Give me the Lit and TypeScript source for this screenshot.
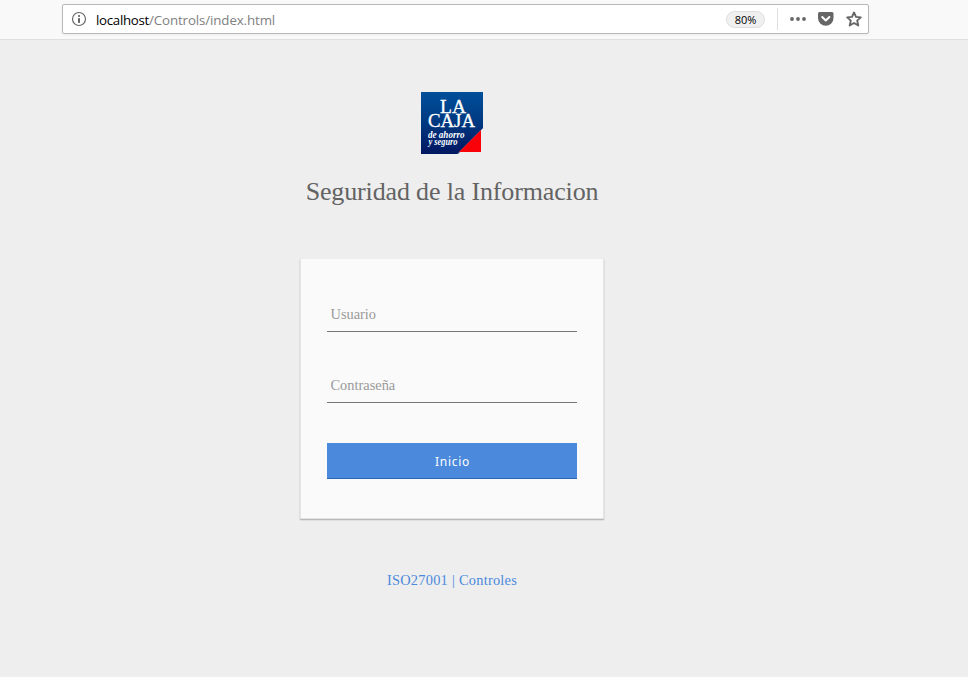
import { LitElement, html, css } from "lit";
import { customElement } from "lit/decorators.js";

@customElement("address-bar")
class AddressBar extends LitElement {
  static styles = css`
    :host { display: block; box-sizing: border-box; height: 40px; padding: 4px 0 0 62px; background: #f9f9fa; border-bottom: 1px solid #e0e0e1; }
    .field { box-sizing: border-box; width: 807px; height: 30px; display: flex; align-items: center; background: #fff; border: 1px solid #b8b8b9; border-radius: 2px; box-shadow: 0 1px 3px rgba(0,0,0,.05); padding: 0 6px 0 8px; }
    svg { display: block; flex: none; }
    .url { flex: 1; margin-left: 9px; font: 13.3px/20px "Open Sans", sans-serif; letter-spacing: -0.11px; color: #808080; white-space: nowrap; padding-top: 1px; }
    .host { color: #000; letter-spacing: -0.3px; }
    .zoom { box-sizing: border-box; width: 39px; height: 17px; border: 1px solid #dedede; border-radius: 9px; background: #f0f0f0; font: 11px/16px "Open Sans", sans-serif; letter-spacing: -0.05px; text-align: center; color: #000; }
    .rule { width: 1px; height: 22px; background: #dfdfdf; margin: 0 12px; }
    .pocket { margin: 0 11px 0 12px; }
  `;
  render() {
    return html`<div class="field">
      <svg width="16" height="16" viewBox="0 0 16 16"><circle cx="8" cy="8" r="6.5" fill="none" stroke="#696969" stroke-width="1.2"/><rect x="7" y="4" width="2" height="2" rx=".7" fill="#666"/><rect x="7" y="7" width="2" height="5" rx=".7" fill="#666"/></svg>
      <div class="url"><span class="host">localhost</span>/Controls/index.html</div>
      <div class="zoom">80%</div>
      <div class="rule"></div>
      <svg width="16" height="16" viewBox="0 0 16 16" fill="#666"><circle cx="2" cy="8" r="1.900"/><circle cx="8" cy="8" r="1.900"/><circle cx="14" cy="8" r="1.900"/></svg>
      <svg class="pocket" width="17" height="16" viewBox="0 0 17 16"><path d="M1.500 1h12.500q1.500 0 1.500 1.500V7a7.750 7.750 0 0 1-15.500 0V2.500Q0 1 1.500 1z" fill="#666"/><path d="M4.200 6l3.600 3.500L11.400 6" fill="none" stroke="#fff" stroke-width="2" stroke-linecap="round" stroke-linejoin="round"/></svg>
      <svg width="16" height="16" viewBox="0 0 16 16"><path d="M8 1.500l2 4.400 4.800.5-3.600 3.200 1.100 4.900L8 12l-4.300 2.500 1.100-4.900L1.200 6.400 6 5.900z" fill="none" stroke="#666" stroke-width="1.900" stroke-linejoin="round"/></svg>
    </div>`;
  }
}

@customElement("brand-logo")
class BrandLogo extends LitElement {
  static styles = css`
    :host, svg { display: block; }
    .name { font-family: "Liberation Serif", serif; font-size: 19px; fill: #fff; stroke: #fff; stroke-width: .3px; }
    .tag { font: italic bold 10px "Liberation Serif", serif; fill: #fff; }
  `;
  render() {
    return html`<svg width="62" height="62" viewBox="0 0 62 62">
      <defs><linearGradient id="blue" x1="0" y1="0" x2="0" y2="1"><stop offset="0" stop-color="#00509a"/><stop offset=".5" stop-color="#003880"/><stop offset="1" stop-color="#001660"/></linearGradient></defs>
      <path d="M0 0h62v36L37 62H0z" fill="url(#blue)"/>
      <path d="M62 36h-2L36 60v2z" fill="#eee"/>
      <path d="M0 0h62v36L36 62H0z" fill="url(#blue)"/>
      <path d="M60 38v22H38z" fill="#fa0008"/>
      <text class="name" x="19" y="21" textLength="26" lengthAdjust="spacingAndGlyphs">LA</text>
      <text class="name" x="7" y="35" textLength="47" lengthAdjust="spacingAndGlyphs">CAJA</text>
      <text class="tag" x="7" y="45.500" textLength="36.500" lengthAdjust="spacingAndGlyphs">de ahorro</text>
      <text class="tag" x="7.500" y="52.500" textLength="29" lengthAdjust="spacingAndGlyphs">y seguro</text>
    </svg>`;
  }
}

@customElement("login-form")
class LoginForm extends LitElement {
  static styles = css`
    :host { display: block; box-sizing: border-box; width: 304px; height: 260px; padding: 38px 26px 0; background: #fafafa; border: solid #e4e4e4; border-width: 0 1px 1px; box-shadow: 0 1px 1px rgba(0,0,0,.18), 0 1px 2px rgba(0,0,0,.08); }
    input { display: block; box-sizing: border-box; width: 250px; height: 35px; margin: 0 0 36px; padding: 0 3.500px; border: 0; border-bottom: 1px solid #757575; border-radius: 0; outline: 0; background: transparent; font: 14.400px "Liberation Serif", serif; color: #555; }
    input::placeholder { color: #999; opacity: 1; }
    button { display: block; box-sizing: border-box; width: 250px; height: 36px; margin-top: 40px; padding: 2px 0 0 1px; border: 0; border-bottom: 1px solid #3065b8; background: #4a89dc; color: #fff; font: 12px "Noto Sans", sans-serif; letter-spacing: .7px; }
  `;
  render() {
    return html`<input placeholder="Usuario"><input type="password" placeholder="Contraseña"><button>Inicio</button>`;
  }
}

@customElement("app-root")
class AppRoot extends LitElement {
  static styles = css`
    :host { display: block; height: 677px; overflow: hidden; background: #eee; }
    main { width: 904px; display: flex; flex-direction: column; align-items: center; padding-top: 52px; font-family: "Liberation Serif", serif; }
    h1 { margin: 22px 0 0; font-size: 26px; line-height: 32px; font-weight: 400; letter-spacing: -0.15px; color: #636363; white-space: nowrap; }
    login-form { margin-top: 51px; }
    footer { margin-top: 51px; font-size: 14.400px; line-height: 20px; letter-spacing: .25px; color: #4a89dc; }
    a { color: inherit; text-decoration: none; }
  `;
  render() {
    return html`<address-bar></address-bar>
      <main>
        <brand-logo></brand-logo>
        <h1>Seguridad de la Informacion</h1>
        <login-form></login-form>
        <footer><a href="#">ISO27001</a> | <a href="#">Controles</a></footer>
      </main>`;
  }
}
